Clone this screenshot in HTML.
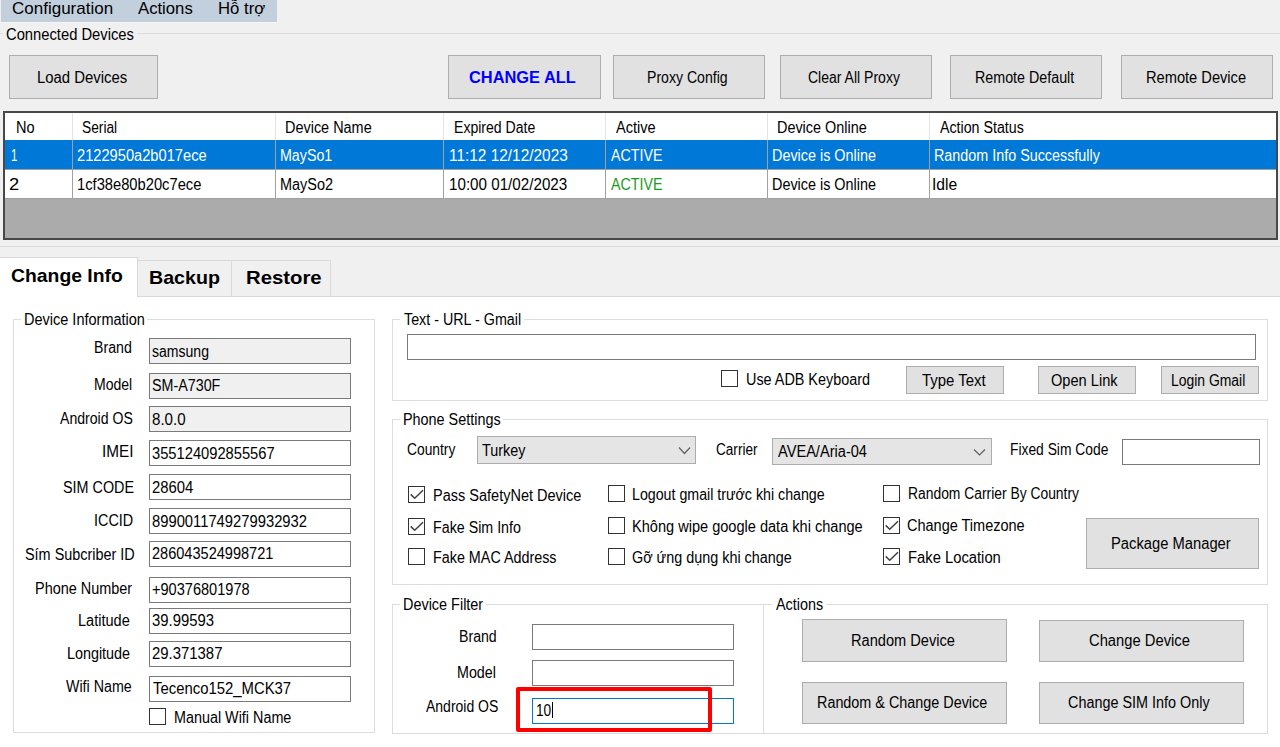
<!DOCTYPE html>
<html><head><meta charset="utf-8"><style>
html,body{margin:0;padding:0;}
body{width:1280px;height:747px;overflow:hidden;position:relative;background:#f0f0f0;font-family:'Liberation Sans', sans-serif;font-size:16px;color:#000;}
.a{position:absolute;}
.t{white-space:nowrap;}
.s{display:inline-block;transform-origin:0 0;}
</style></head><body>
<div class="a" style="left:1px;top:0px;width:276px;height:22px;background:#c2cfdc;"></div>
<div class="a" style="left:1px;top:22px;width:276px;height:1px;background:#f5f5f5;"></div>
<div class="a t" style="left:12.00px;top:0px;font-size:17px;line-height:17px;"><span class="s" style="transform:scaleX(1.0000)">Configuration</span></div>
<div class="a t" style="left:138.00px;top:0px;font-size:17px;line-height:17px;"><span class="s" style="transform:scaleX(0.9818)">Actions</span></div>
<div class="a t" style="left:217.52px;top:0px;font-size:17px;line-height:17px;"><span class="s" style="transform:scaleX(0.9837)">Hỗ trợ</span></div>
<div class="a" style="left:0px;top:33px;width:1280px;height:1px;background:#dcdcdc;"></div>
<div class="a" style="left:3px;top:28px;width:134px;height:12px;background:#f0f0f0;"></div>
<div class="a t" style="left:5.78px;top:27px;font-size:16px;line-height:16px;"><span class="s" style="transform:scaleX(0.9219)">Connected Devices</span></div>
<div class="a" style="left:0px;top:246px;width:1280px;height:1px;background:#dcdcdc;"></div>
<div class="a" style="left:9px;top:55px;width:149px;height:44px;background:#e1e1e1;box-sizing:border-box;border:1px solid #adadad;"></div>
<div class="a t" style="left:37.07px;top:70px;font-size:16px;line-height:16px;"><span class="s" style="transform:scaleX(0.9316)">Load Devices</span></div>
<div class="a" style="left:448px;top:55px;width:153px;height:44px;background:#e1e1e1;box-sizing:border-box;border:1px solid #adadad;"></div>
<div class="a t" style="left:469.48px;top:70px;font-size:16px;line-height:16px;font-weight:bold;color:#0000ff;"><span class="s" style="transform:scaleX(1.0243)">CHANGE ALL</span></div>
<div class="a" style="left:613px;top:55px;width:152px;height:44px;background:#e1e1e1;box-sizing:border-box;border:1px solid #adadad;"></div>
<div class="a t" style="left:646.92px;top:70px;font-size:16px;line-height:16px;"><span class="s" style="transform:scaleX(0.8800)">Proxy Config</span></div>
<div class="a" style="left:780px;top:55px;width:152px;height:44px;background:#e1e1e1;box-sizing:border-box;border:1px solid #adadad;"></div>
<div class="a t" style="left:807.62px;top:70px;font-size:16px;line-height:16px;"><span class="s" style="transform:scaleX(0.8760)">Clear All Proxy</span></div>
<div class="a" style="left:950px;top:55px;width:152px;height:44px;background:#e1e1e1;box-sizing:border-box;border:1px solid #adadad;"></div>
<div class="a t" style="left:975.01px;top:70px;font-size:16px;line-height:16px;"><span class="s" style="transform:scaleX(0.8927)">Remote Default</span></div>
<div class="a" style="left:1121px;top:55px;width:152px;height:44px;background:#e1e1e1;box-sizing:border-box;border:1px solid #adadad;"></div>
<div class="a t" style="left:1146.29px;top:70px;font-size:16px;line-height:16px;"><span class="s" style="transform:scaleX(0.9148)">Remote Device</span></div>
<div class="a" style="left:3px;top:111px;width:1275px;height:129px;background:#ababab;box-sizing:border-box;border:2px solid #484848;"></div>
<div class="a" style="left:5px;top:113px;width:1271px;height:27px;background:#ffffff;"></div>
<div class="a" style="left:5px;top:140px;width:1271px;height:29px;background:#0078d7;"></div>
<div class="a" style="left:5px;top:169px;width:1271px;height:1px;background:#a0a0a0;"></div>
<div class="a" style="left:5px;top:170px;width:1271px;height:29px;background:#ffffff;"></div>
<div class="a" style="left:5px;top:198px;width:1271px;height:1px;background:#a0a0a0;"></div>
<div class="a" style="left:72px;top:113px;width:1px;height:27px;background:#e3e3e3;"></div>
<div class="a" style="left:72px;top:140px;width:1px;height:59px;background:#a0a0a0;"></div>
<div class="a" style="left:275px;top:113px;width:1px;height:27px;background:#e3e3e3;"></div>
<div class="a" style="left:275px;top:140px;width:1px;height:59px;background:#a0a0a0;"></div>
<div class="a" style="left:443px;top:113px;width:1px;height:27px;background:#e3e3e3;"></div>
<div class="a" style="left:443px;top:140px;width:1px;height:59px;background:#a0a0a0;"></div>
<div class="a" style="left:605px;top:113px;width:1px;height:27px;background:#e3e3e3;"></div>
<div class="a" style="left:605px;top:140px;width:1px;height:59px;background:#a0a0a0;"></div>
<div class="a" style="left:767px;top:113px;width:1px;height:27px;background:#e3e3e3;"></div>
<div class="a" style="left:767px;top:140px;width:1px;height:59px;background:#a0a0a0;"></div>
<div class="a" style="left:929px;top:113px;width:1px;height:27px;background:#e3e3e3;"></div>
<div class="a" style="left:929px;top:140px;width:1px;height:59px;background:#a0a0a0;"></div>
<div class="a t" style="left:16.09px;top:120px;font-size:16px;line-height:16px;"><span class="s" style="transform:scaleX(0.9079)">No</span></div>
<div class="a t" style="left:82.39px;top:120px;font-size:16px;line-height:16px;"><span class="s" style="transform:scaleX(0.8590)">Serial</span></div>
<div class="a t" style="left:284.60px;top:120px;font-size:16px;line-height:16px;"><span class="s" style="transform:scaleX(0.9026)">Device Name</span></div>
<div class="a t" style="left:453.62px;top:120px;font-size:16px;line-height:16px;"><span class="s" style="transform:scaleX(0.8791)">Expired Date</span></div>
<div class="a t" style="left:615.50px;top:120px;font-size:16px;line-height:16px;"><span class="s" style="transform:scaleX(0.9070)">Active</span></div>
<div class="a t" style="left:777.10px;top:120px;font-size:16px;line-height:16px;"><span class="s" style="transform:scaleX(0.9005)">Device Online</span></div>
<div class="a t" style="left:939.50px;top:120px;font-size:16px;line-height:16px;"><span class="s" style="transform:scaleX(0.8883)">Action Status</span></div>
<div class="a t" style="left:10.54px;top:148px;font-size:16px;line-height:16px;color:#ffffff;"><span class="s" style="transform:scaleX(0.7143)">1</span></div>
<div class="a t" style="left:77.08px;top:148px;font-size:16px;line-height:16px;color:#ffffff;"><span class="s" style="transform:scaleX(0.9161)">2122950a2b017ece</span></div>
<div class="a t" style="left:279.61px;top:148px;font-size:16px;line-height:16px;color:#ffffff;"><span class="s" style="transform:scaleX(0.8904)">MaySo1</span></div>
<div class="a t" style="left:448.54px;top:148px;font-size:16px;line-height:16px;color:#ffffff;"><span class="s" style="transform:scaleX(0.9631)">11:12 12/12/2023</span></div>
<div class="a t" style="left:610.50px;top:148px;font-size:16px;line-height:16px;color:#ffffff;"><span class="s" style="transform:scaleX(0.8904)">ACTIVE</span></div>
<div class="a t" style="left:771.60px;top:148px;font-size:16px;line-height:16px;color:#ffffff;"><span class="s" style="transform:scaleX(0.8991)">Device is Online</span></div>
<div class="a t" style="left:933.60px;top:148px;font-size:16px;line-height:16px;color:#ffffff;"><span class="s" style="transform:scaleX(0.8967)">Random Info Successfully</span></div>
<div class="a t" style="left:8.86px;top:177px;font-size:16px;line-height:16px;"><span class="s" style="transform:scaleX(1.1429)">2</span></div>
<div class="a t" style="left:77.08px;top:177px;font-size:16px;line-height:16px;"><span class="s" style="transform:scaleX(0.9198)">1cf38e80b20c7ece</span></div>
<div class="a t" style="left:279.60px;top:177px;font-size:16px;line-height:16px;"><span class="s" style="transform:scaleX(0.9035)">MaySo2</span></div>
<div class="a t" style="left:448.55px;top:177px;font-size:16px;line-height:16px;"><span class="s" style="transform:scaleX(0.9492)">10:00 01/02/2023</span></div>
<div class="a t" style="left:610.50px;top:177px;font-size:16px;line-height:16px;color:#1a9a1a;"><span class="s" style="transform:scaleX(0.8904)">ACTIVE</span></div>
<div class="a t" style="left:771.60px;top:177px;font-size:16px;line-height:16px;"><span class="s" style="transform:scaleX(0.8991)">Device is Online</span></div>
<div class="a t" style="left:931.79px;top:177px;font-size:16px;line-height:16px;"><span class="s" style="transform:scaleX(0.9783)">Idle</span></div>
<div class="a" style="left:0px;top:296px;width:1280px;height:451px;background:#ffffff;"></div>
<div class="a" style="left:137px;top:296px;width:1143px;height:1px;background:#d9d9d9;"></div>
<div class="a" style="left:137px;top:260px;width:95px;height:37px;background:#f0f0f0;box-sizing:border-box;border:1px solid #d9d9d9;"></div>
<div class="a" style="left:231px;top:260px;width:100px;height:37px;background:#f0f0f0;box-sizing:border-box;border:1px solid #d9d9d9;"></div>
<div class="a" style="left:-1px;top:257px;width:139px;height:40px;background:#ffffff;box-sizing:border-box;border:1px solid #d9d9d9;border-bottom:none;"></div>
<div class="a t" style="left:10.98px;top:266px;font-size:19px;line-height:19px;font-weight:bold;"><span class="s" style="transform:scaleX(1.0185)">Change Info</span></div>
<div class="a t" style="left:148.57px;top:268px;font-size:19px;line-height:19px;font-weight:bold;"><span class="s" style="transform:scaleX(1.0328)">Backup</span></div>
<div class="a t" style="left:245.53px;top:268px;font-size:19px;line-height:19px;font-weight:bold;"><span class="s" style="transform:scaleX(1.0696)">Restore</span></div>
<div class="a" style="left:13px;top:319px;width:362px;height:414px;box-sizing:border-box;border:1px solid #dcdcdc;"></div>
<div class="a" style="left:21px;top:318px;width:126px;height:3px;background:#ffffff;"></div>
<div class="a t" style="left:24.09px;top:312px;font-size:16px;line-height:16px;"><span class="s" style="transform:scaleX(0.9065)">Device Information</span></div>
<div class="a" style="left:149px;top:338px;width:202px;height:26px;background:#f0f0f0;box-sizing:border-box;border:1px solid #7a7a7a;"></div>
<div class="a t" style="left:152.12px;top:344px;font-size:16px;line-height:16px;"><span class="s" style="transform:scaleX(0.8778)">samsung</span></div>
<div class="a t" style="left:94.12px;top:340px;font-size:16px;line-height:16px;"><span class="s" style="transform:scaleX(0.8841)">Brand</span></div>
<div class="a" style="left:149px;top:373px;width:202px;height:26px;background:#f0f0f0;box-sizing:border-box;border:1px solid #7a7a7a;"></div>
<div class="a t" style="left:152.11px;top:378px;font-size:16px;line-height:16px;"><span class="s" style="transform:scaleX(0.8933)">SM-A730F</span></div>
<div class="a t" style="left:93.52px;top:377px;font-size:16px;line-height:16px;"><span class="s" style="transform:scaleX(0.8774)">Model</span></div>
<div class="a" style="left:149px;top:406px;width:202px;height:26px;background:#f0f0f0;box-sizing:border-box;border:1px solid #7a7a7a;"></div>
<div class="a t" style="left:152.06px;top:412px;font-size:16px;line-height:16px;"><span class="s" style="transform:scaleX(0.9441)">8.0.0</span></div>
<div class="a t" style="left:59.75px;top:411px;font-size:16px;line-height:16px;"><span class="s" style="transform:scaleX(0.8799)">Android OS</span></div>
<div class="a" style="left:149px;top:440px;width:202px;height:26px;background:#ffffff;box-sizing:border-box;border:1px solid #7a7a7a;"></div>
<div class="a t" style="left:152.08px;top:446px;font-size:16px;line-height:16px;"><span class="s" style="transform:scaleX(0.9189)">355124092855567</span></div>
<div class="a t" style="left:102.49px;top:444px;font-size:16px;line-height:16px;"><span class="s" style="transform:scaleX(0.9567)">IMEI</span></div>
<div class="a" style="left:149px;top:474px;width:202px;height:26px;background:#ffffff;box-sizing:border-box;border:1px solid #7a7a7a;"></div>
<div class="a t" style="left:152.07px;top:480px;font-size:16px;line-height:16px;"><span class="s" style="transform:scaleX(0.9279)">28604</span></div>
<div class="a t" style="left:62.85px;top:480px;font-size:16px;line-height:16px;"><span class="s" style="transform:scaleX(0.8974)">SIM CODE</span></div>
<div class="a" style="left:149px;top:508px;width:202px;height:26px;background:#ffffff;box-sizing:border-box;border:1px solid #7a7a7a;"></div>
<div class="a t" style="left:152.08px;top:514px;font-size:16px;line-height:16px;"><span class="s" style="transform:scaleX(0.9232)">8990011749279932932</span></div>
<div class="a t" style="left:94.45px;top:513px;font-size:16px;line-height:16px;"><span class="s" style="transform:scaleX(0.8988)">ICCID</span></div>
<div class="a" style="left:149px;top:541px;width:202px;height:26px;background:#ffffff;box-sizing:border-box;border:1px solid #7a7a7a;"></div>
<div class="a t" style="left:152.09px;top:546px;font-size:16px;line-height:16px;"><span class="s" style="transform:scaleX(0.9091)">286043524998721</span></div>
<div class="a t" style="left:25.35px;top:547px;font-size:16px;line-height:16px;"><span class="s" style="transform:scaleX(0.9012)">Sím Subcriber ID</span></div>
<div class="a" style="left:149px;top:577px;width:202px;height:26px;background:#ffffff;box-sizing:border-box;border:1px solid #7a7a7a;"></div>
<div class="a t" style="left:152.09px;top:582px;font-size:16px;line-height:16px;"><span class="s" style="transform:scaleX(0.9104)">+90376801978</span></div>
<div class="a t" style="left:34.70px;top:581px;font-size:16px;line-height:16px;"><span class="s" style="transform:scaleX(0.9024)">Phone Number</span></div>
<div class="a" style="left:149px;top:608px;width:202px;height:26px;background:#ffffff;box-sizing:border-box;border:1px solid #7a7a7a;"></div>
<div class="a t" style="left:152.07px;top:613px;font-size:16px;line-height:16px;"><span class="s" style="transform:scaleX(0.9292)">39.99593</span></div>
<div class="a t" style="left:77.84px;top:613px;font-size:16px;line-height:16px;"><span class="s" style="transform:scaleX(0.9091)">Latitude</span></div>
<div class="a" style="left:149px;top:641px;width:202px;height:26px;background:#ffffff;box-sizing:border-box;border:1px solid #7a7a7a;"></div>
<div class="a t" style="left:152.07px;top:646px;font-size:16px;line-height:16px;"><span class="s" style="transform:scaleX(0.9311)">29.371387</span></div>
<div class="a t" style="left:67.20px;top:646px;font-size:16px;line-height:16px;"><span class="s" style="transform:scaleX(0.8971)">Longitude</span></div>
<div class="a" style="left:149px;top:676px;width:202px;height:26px;background:#ffffff;box-sizing:border-box;border:1px solid #7a7a7a;"></div>
<div class="a t" style="left:153.00px;top:681px;font-size:16px;line-height:16px;"><span class="s" style="transform:scaleX(0.9297)">Tecenco152_MCK37</span></div>
<div class="a t" style="left:66.25px;top:679px;font-size:16px;line-height:16px;"><span class="s" style="transform:scaleX(0.8904)">Wifi Name</span></div>
<div class="a" style="left:149px;top:708px;width:17px;height:17px;background:#ffffff;box-sizing:border-box;border:1px solid #333333;"></div>
<div class="a t" style="left:173.90px;top:710px;font-size:16px;line-height:16px;"><span class="s" style="transform:scaleX(0.8977)">Manual Wifi Name</span></div>
<div class="a" style="left:392px;top:319px;width:876px;height:82px;box-sizing:border-box;border:1px solid #dcdcdc;"></div>
<div class="a" style="left:400px;top:318px;width:124px;height:3px;background:#ffffff;"></div>
<div class="a t" style="left:403.75px;top:312px;font-size:16px;line-height:16px;"><span class="s" style="transform:scaleX(0.8942)">Text - URL - Gmail</span></div>
<div class="a" style="left:407px;top:334px;width:849px;height:26px;background:#ffffff;box-sizing:border-box;border:1px solid #7a7a7a;"></div>
<div class="a" style="left:721px;top:370px;width:17px;height:17px;background:#ffffff;box-sizing:border-box;border:1px solid #333333;"></div>
<div class="a t" style="left:746.00px;top:372px;font-size:16px;line-height:16px;"><span class="s" style="transform:scaleX(0.8993)">Use ADB Keyboard</span></div>
<div class="a" style="left:906px;top:366px;width:98px;height:28px;background:#e1e1e1;box-sizing:border-box;border:1px solid #adadad;"></div>
<div class="a t" style="left:921.90px;top:373px;font-size:16px;line-height:16px;"><span class="s" style="transform:scaleX(0.9324)">Type Text</span></div>
<div class="a" style="left:1038px;top:366px;width:98px;height:28px;background:#e1e1e1;box-sizing:border-box;border:1px solid #adadad;"></div>
<div class="a t" style="left:1050.89px;top:373px;font-size:16px;line-height:16px;"><span class="s" style="transform:scaleX(0.9125)">Open Link</span></div>
<div class="a" style="left:1161px;top:366px;width:98px;height:28px;background:#e1e1e1;box-sizing:border-box;border:1px solid #adadad;"></div>
<div class="a t" style="left:1170.73px;top:373px;font-size:16px;line-height:16px;"><span class="s" style="transform:scaleX(0.8699)">Login Gmail</span></div>
<div class="a" style="left:392px;top:419px;width:876px;height:166px;box-sizing:border-box;border:1px solid #dcdcdc;"></div>
<div class="a" style="left:400px;top:418px;width:103px;height:3px;background:#ffffff;"></div>
<div class="a t" style="left:402.85px;top:412px;font-size:16px;line-height:16px;"><span class="s" style="transform:scaleX(0.8995)">Phone Settings</span></div>
<div class="a t" style="left:406.64px;top:442px;font-size:16px;line-height:16px;"><span class="s" style="transform:scaleX(0.8636)">Country</span></div>
<div class="a" style="left:477px;top:436px;width:219px;height:28px;background:#e5e5e5;box-sizing:border-box;border:1px solid #acacac;"></div>
<div class="a t" style="left:481.90px;top:443px;font-size:16px;line-height:16px;"><span class="s" style="transform:scaleX(0.8979)">Turkey</span></div>
<svg class="a" style="left:678px;top:446px" width="13" height="9"><path d="M1 1.5 L6.5 7.5 L12 1.5" fill="none" stroke="#606060" stroke-width="1.2"/></svg>
<div class="a t" style="left:716.40px;top:442px;font-size:16px;line-height:16px;"><span class="s" style="transform:scaleX(0.8490)">Carrier</span></div>
<div class="a" style="left:772px;top:438px;width:220px;height:27px;background:#e5e5e5;box-sizing:border-box;border:1px solid #acacac;"></div>
<div class="a t" style="left:777.50px;top:444px;font-size:16px;line-height:16px;"><span class="s" style="transform:scaleX(0.9124)">AVEA/Aria-04</span></div>
<svg class="a" style="left:973px;top:447.5px" width="13" height="8.5"><path d="M1 1.5 L6.5 7.0 L12 1.5" fill="none" stroke="#606060" stroke-width="1.2"/></svg>
<div class="a t" style="left:1010.14px;top:442px;font-size:16px;line-height:16px;"><span class="s" style="transform:scaleX(0.8638)">Fixed Sim Code</span></div>
<div class="a" style="left:1122px;top:439px;width:138px;height:26px;background:#ffffff;box-sizing:border-box;border:1px solid #7a7a7a;"></div>
<div class="a" style="left:408px;top:486px;width:17px;height:17px;background:#ffffff;box-sizing:border-box;border:1px solid #333333;"></div>
<svg class="a" style="left:408px;top:486px" width="17" height="17"><path d="M2.7 8.4 L6.7 12.2 L15 4.2" fill="none" stroke="#404040" stroke-width="1.5"/></svg>
<div class="a t" style="left:432.69px;top:488px;font-size:16px;line-height:16px;"><span class="s" style="transform:scaleX(0.9068)">Pass SafetyNet Device</span></div>
<div class="a" style="left:408px;top:518px;width:17px;height:17px;background:#ffffff;box-sizing:border-box;border:1px solid #333333;"></div>
<svg class="a" style="left:408px;top:518px" width="17" height="17"><path d="M2.7 8.4 L6.7 12.2 L15 4.2" fill="none" stroke="#404040" stroke-width="1.5"/></svg>
<div class="a t" style="left:432.71px;top:520px;font-size:16px;line-height:16px;"><span class="s" style="transform:scaleX(0.8907)">Fake Sim Info</span></div>
<div class="a" style="left:408px;top:548px;width:17px;height:17px;background:#ffffff;box-sizing:border-box;border:1px solid #333333;"></div>
<div class="a t" style="left:432.70px;top:550px;font-size:16px;line-height:16px;"><span class="s" style="transform:scaleX(0.8963)">Fake MAC Address</span></div>
<div class="a" style="left:608px;top:485px;width:17px;height:17px;background:#ffffff;box-sizing:border-box;border:1px solid #333333;"></div>
<div class="a t" style="left:632.41px;top:487px;font-size:16px;line-height:16px;"><span class="s" style="transform:scaleX(0.8884)">Logout gmail trước khi change</span></div>
<div class="a" style="left:608px;top:517px;width:17px;height:17px;background:#ffffff;box-sizing:border-box;border:1px solid #333333;"></div>
<div class="a t" style="left:632.39px;top:519px;font-size:16px;line-height:16px;"><span class="s" style="transform:scaleX(0.9099)">Không wipe google data khi change</span></div>
<div class="a" style="left:608px;top:548px;width:17px;height:17px;background:#ffffff;box-sizing:border-box;border:1px solid #333333;"></div>
<div class="a t" style="left:632.40px;top:550px;font-size:16px;line-height:16px;"><span class="s" style="transform:scaleX(0.8989)">Gỡ ứng dụng khi change</span></div>
<div class="a" style="left:883px;top:485px;width:17px;height:17px;background:#ffffff;box-sizing:border-box;border:1px solid #333333;"></div>
<div class="a t" style="left:907.63px;top:486px;font-size:16px;line-height:16px;"><span class="s" style="transform:scaleX(0.8661)">Random Carrier By Country</span></div>
<div class="a" style="left:883px;top:517px;width:17px;height:17px;background:#ffffff;box-sizing:border-box;border:1px solid #333333;"></div>
<svg class="a" style="left:883px;top:517px" width="17" height="17"><path d="M2.7 8.4 L6.7 12.2 L15 4.2" fill="none" stroke="#404040" stroke-width="1.5"/></svg>
<div class="a t" style="left:906.59px;top:518px;font-size:16px;line-height:16px;"><span class="s" style="transform:scaleX(0.9062)">Change Timezone</span></div>
<div class="a" style="left:883px;top:548px;width:17px;height:17px;background:#ffffff;box-sizing:border-box;border:1px solid #333333;"></div>
<svg class="a" style="left:883px;top:548px" width="17" height="17"><path d="M2.7 8.4 L6.7 12.2 L15 4.2" fill="none" stroke="#404040" stroke-width="1.5"/></svg>
<div class="a t" style="left:907.58px;top:550px;font-size:16px;line-height:16px;"><span class="s" style="transform:scaleX(0.9235)">Fake Location</span></div>
<div class="a" style="left:1086px;top:518px;width:173px;height:51px;background:#e1e1e1;box-sizing:border-box;border:1px solid #adadad;"></div>
<div class="a t" style="left:1110.88px;top:536px;font-size:16px;line-height:16px;"><span class="s" style="transform:scaleX(0.9217)">Package Manager</span></div>
<div class="a" style="left:392px;top:604px;width:372px;height:130px;box-sizing:border-box;border:1px solid #dcdcdc;"></div>
<div class="a" style="left:400px;top:603px;width:86px;height:3px;background:#ffffff;"></div>
<div class="a t" style="left:402.85px;top:597px;font-size:16px;line-height:16px;"><span class="s" style="transform:scaleX(0.9017)">Device Filter</span></div>
<div class="a t" style="left:458.52px;top:629px;font-size:16px;line-height:16px;"><span class="s" style="transform:scaleX(0.8829)">Brand</span></div>
<div class="a" style="left:532px;top:624px;width:202px;height:26px;background:#ffffff;box-sizing:border-box;border:1px solid #7a7a7a;"></div>
<div class="a t" style="left:457.11px;top:665px;font-size:16px;line-height:16px;"><span class="s" style="transform:scaleX(0.8929)">Model</span></div>
<div class="a" style="left:532px;top:660px;width:202px;height:26px;background:#ffffff;box-sizing:border-box;border:1px solid #7a7a7a;"></div>
<div class="a t" style="left:425.60px;top:699px;font-size:16px;line-height:16px;"><span class="s" style="transform:scaleX(0.8738)">Android OS</span></div>
<div class="a" style="left:532px;top:698px;width:202px;height:26px;background:#ffffff;box-sizing:border-box;border:1px solid #0078d7;"></div>
<div class="a t" style="left:536.04px;top:703px;font-size:16px;line-height:16px;"><span class="s" style="transform:scaleX(0.8563)">10</span></div>
<div class="a" style="left:552px;top:702px;width:1px;height:16px;background:#000000;"></div>
<div class="a" style="left:763px;top:604px;width:505px;height:130px;box-sizing:border-box;border:1px solid #dcdcdc;"></div>
<div class="a" style="left:772px;top:603px;width:54px;height:3px;background:#ffffff;"></div>
<div class="a t" style="left:776.30px;top:597px;font-size:16px;line-height:16px;"><span class="s" style="transform:scaleX(0.8981)">Actions</span></div>
<div class="a" style="left:802px;top:619px;width:205px;height:43px;background:#e1e1e1;box-sizing:border-box;border:1px solid #adadad;"></div>
<div class="a t" style="left:850.99px;top:633px;font-size:16px;line-height:16px;"><span class="s" style="transform:scaleX(0.9134)">Random Device</span></div>
<div class="a" style="left:1039px;top:620px;width:205px;height:42px;background:#e1e1e1;box-sizing:border-box;border:1px solid #adadad;"></div>
<div class="a t" style="left:1088.68px;top:633px;font-size:16px;line-height:16px;"><span class="s" style="transform:scaleX(0.9222)">Change Device</span></div>
<div class="a" style="left:802px;top:682px;width:205px;height:42px;background:#e1e1e1;box-sizing:border-box;border:1px solid #adadad;"></div>
<div class="a t" style="left:817.20px;top:695px;font-size:16px;line-height:16px;"><span class="s" style="transform:scaleX(0.8984)">Random &amp; Change Device</span></div>
<div class="a" style="left:1039px;top:682px;width:205px;height:42px;background:#e1e1e1;box-sizing:border-box;border:1px solid #adadad;"></div>
<div class="a t" style="left:1068.10px;top:695px;font-size:16px;line-height:16px;"><span class="s" style="transform:scaleX(0.8994)">Change SIM Info Only</span></div>
<div class="a" style="left:516px;top:687px;width:196px;height:45px;box-sizing:border-box;border:4px solid #ff0000;border-radius:2px;"></div>
</body></html>
